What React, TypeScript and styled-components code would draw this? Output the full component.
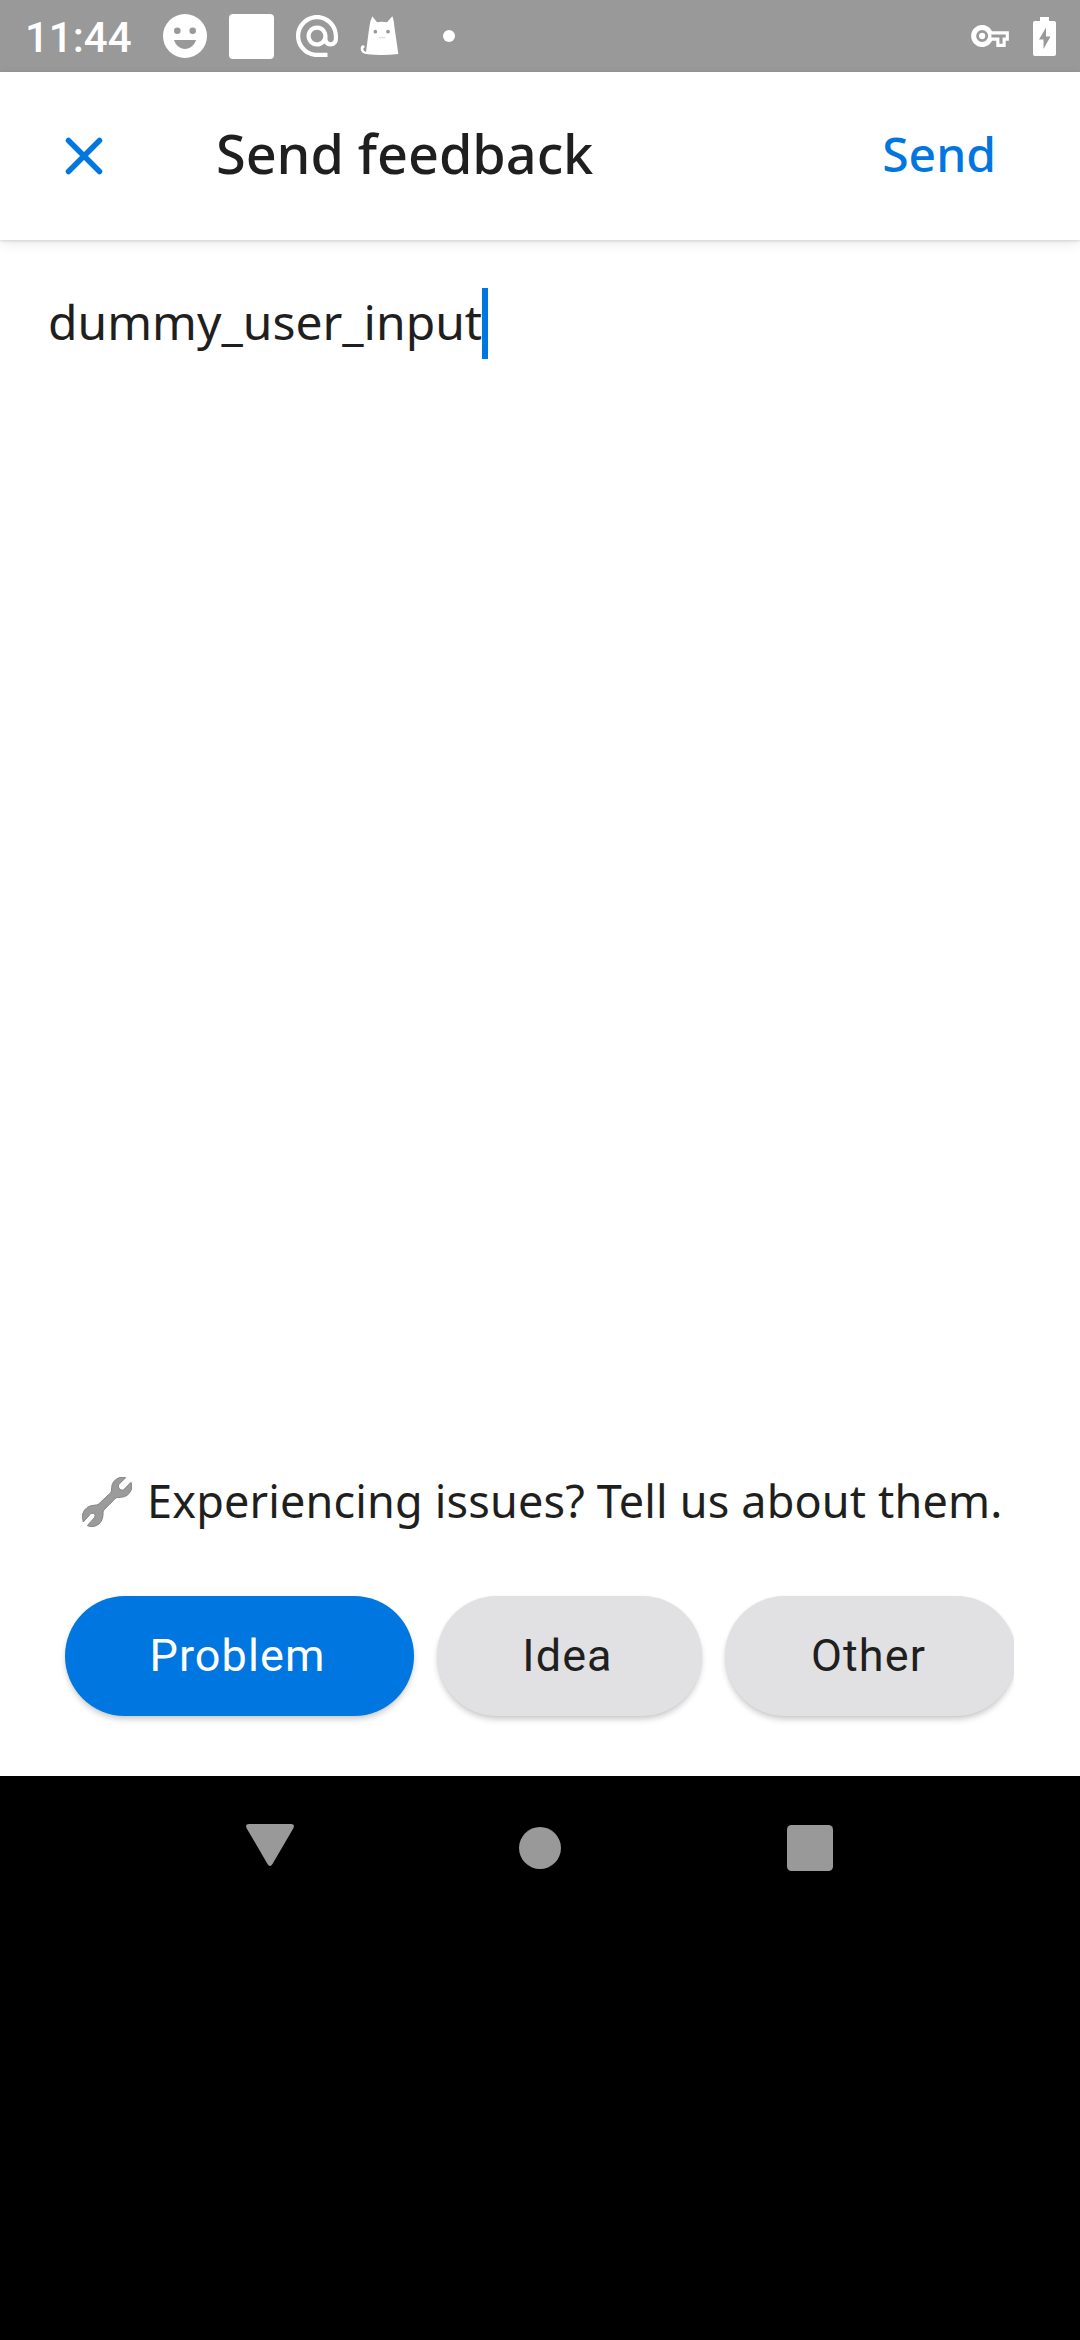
import React, { useState } from "react";
import styled, { createGlobalStyle } from "styled-components";

const GlobalStyle = createGlobalStyle`
  * { box-sizing: border-box; }
  body { margin: 0; background: #000; }
`;

const BLUE = "#0076e0";
const INK = "#1f1f20";

const Screen = styled.div`
  display: flex;
  flex-direction: column;
  width: 1080px;
  height: 2340px;
  background: #000;
  color: ${INK};
  font-family: "Noto Sans", sans-serif;
  overflow: hidden;
`;

const StatusBar = styled.header`
  display: flex;
  align-items: center;
  justify-content: space-between;
  height: 72px;
  flex: none;
  padding: 0 24px 0 25px;
  background: #999;
  color: #fff;
`;

const StatusGroup = styled.div<{ $gap: number }>`
  display: flex;
  align-items: center;
  gap: ${(p) => p.$gap}px;
`;

const Clock = styled.span`
  width: 116px;
  padding-top: 3px;
  font: 500 42px/48px Roboto, sans-serif;
  white-space: nowrap;
`;

const Glyph = styled.svg`
  display: block;
  flex: none;
`;

const Blank = styled.span`
  width: 45px;
  height: 45px;
  border-radius: 4px;
  background: #fff;
`;

const MoreDot = styled.span`
  width: 12px;
  height: 12px;
  margin-left: 22px;
  border-radius: 50%;
  background: #fff;
`;

const AppWindow = styled.main`
  display: flex;
  flex-direction: column;
  height: 1704px;
  flex: none;
  background: #fff;
`;

const Toolbar = styled.div`
  display: flex;
  align-items: center;
  height: 168px;
  flex: none;
  padding: 0 84px 0 65px;
  background: #fff;
  box-shadow: 0 1px 3px rgba(0, 0, 0, 0.14), 0 4px 12px rgba(0, 0, 0, 0.08);
`;

const PlainButton = styled.button`
  display: flex;
  border: 0;
  padding: 0;
  background: none;
  color: ${BLUE};
`;

const Title = styled.h1`
  flex: 1;
  margin: 0 0 0 113px;
  padding-bottom: 6px;
  font-size: 54px;
  font-weight: 500;
  line-height: 74px;
  letter-spacing: -0.05px;
  white-space: nowrap;
`;

const SendButton = styled(PlainButton)`
  padding-bottom: 5px;
  font: 500 48px/66px "Noto Sans", sans-serif;
`;

const Editor = styled.section`
  display: flex;
  align-items: flex-start;
  flex: 1;
  padding: 48px;
`;

const EditorText = styled.span`
  margin-top: -2px;
  font-size: 48px;
  line-height: 71px;
  white-space: nowrap;
`;

const Caret = styled.span`
  width: 6px;
  height: 71px;
  background: ${BLUE};
`;

const Footer = styled.footer`
  display: flex;
  flex-direction: column;
  gap: 61px;
  padding: 0 66px 60px 65px;
`;

const Hint = styled.p`
  display: flex;
  align-items: center;
  gap: 15px;
  height: 66px;
  margin: 0;
  padding-left: 17px;
  font-size: 45px;
  line-height: 62px;
  letter-spacing: 0.16px;
  white-space: nowrap;
`;

const HintText = styled.span`
  padding-bottom: 2px;
`;

const Chips = styled.div`
  display: flex;
  gap: 23px;
  margin: -8px 0 -24px -24px;
  padding: 8px 0 24px 24px;
  overflow: hidden;
`;

const Chip = styled.button<{ $active: boolean; $width: number }>`
  flex: none;
  width: ${(p) => p.$width}px;
  height: 120px;
  border: 0;
  border-radius: 60px;
  padding: 0 4px 2px 0;
  background: ${(p) => (p.$active ? BLUE : "#e1e1e3")};
  color: ${(p) => (p.$active ? "#fff" : INK)};
  box-shadow: 0 4px 6px -1px rgba(0, 0, 0, 0.22), 0 0 2px rgba(0, 0, 0, 0.06);
  font: 400 45px/53px Roboto, sans-serif;
  letter-spacing: 1.1px;
`;

const NavBar = styled.nav`
  display: grid;
  grid-template-columns: repeat(3, 270px);
  justify-content: center;
  justify-items: center;
  align-items: center;
  height: 144px;
  flex: none;
  color: #999;
`;

const Smile = () => (
  <Glyph width="44" height="44" viewBox="0 0 44 44">
    <circle cx="22" cy="22" r="22" fill="#fff" />
    <circle cx="14.3" cy="16.7" r="3.3" fill="#999" />
    <circle cx="29.7" cy="16.7" r="3.3" fill="#999" />
    <path d="M11 26h22c-1.800 5.400-6 9-11 9s-9.200-3.600-11-9z" fill="#999" />
  </Glyph>
);

const AtSign = () => (
  <Glyph width="42" height="42" viewBox="2 1.950 20 20" fill="#fff">
    <path d="M12 1.950c-5.520 0-10 4.480-10 10s4.480 10 10 10h5v-2h-5c-4.340 0-8-3.660-8-8s3.660-8 8-8 8 3.660 8 8v1.430c0 .79-.71 1.570-1.500 1.570s-1.500-.78-1.500-1.570v-1.430c0-2.760-2.240-5-5-5s-5 2.240-5 5 2.240 5 5 5c1.380 0 2.640-.56 3.540-1.470.65.89 1.770 1.470 2.960 1.470 1.970 0 3.500-1.600 3.500-3.570v-1.430c0-5.520-4.480-10-10-10zm0 13c-1.660 0-3-1.340-3-3s1.340-3 3-3 3 1.340 3 3-1.340 3-3 3z" />
  </Glyph>
);

const Cat = () => (
  <Glyph width="39" height="40" viewBox="425 46 117 120">
    <path
      d="M462 47l14 18q14-4 30 0l16-18q4 8 6 30l12 83q-48 6-92 1-20-1-21-16 0-11 7-11 7 1 4 7-4 1-3 5 1 6 8 8l10-75q2-18 9-32z"
      fill="#fff"
    />
    <circle cx="471" cy="93" r="5.500" fill="#999" />
    <circle cx="509" cy="93" r="5.500" fill="#999" />
    <path d="M481 111q5 2 10-1 5 3 10 1" fill="none" stroke="#ccc" strokeWidth="2.500" />
  </Glyph>
);

const Key = () => (
  <Glyph width="38" height="22" viewBox="0 5 24 14" fill="#fff">
    <path d="M22 19h-6v-4h-2.680c-1.140 2.420-3.600 4-6.320 4-3.860 0-7-3.140-7-7s3.140-7 7-7c2.720 0 5.170 1.580 6.320 4H24v6h-2v4zm-4-2h2v-4h2v-2H11.940l-.23-.67C11.010 8.340 9.110 7 7 7c-2.760 0-5 2.240-5 5s2.240 5 5 5c2.110 0 4.010-1.340 4.710-3.330l.23-.67H18v4z" />
    <path d="M7 6a6 6 0 1 0 0 12 6 6 0 1 0 0-12zm0 2.200a3.800 3.800 0 1 1 0 7.600 3.800 3.800 0 1 1 0-7.600z" />
    <circle cx="7" cy="12" r="2" />
  </Glyph>
);

const Battery = () => (
  <Glyph width="23" height="39" viewBox="0 0 23 39">
    <path d="M7 0h9v4h5q2 0 2 2v31q0 2-2 2H2q-2 0-2-2V6q0-2 2-2h5z" fill="#fff" />
    <path d="M13 10.500v9h4.500L10.500 32v-9.500H6z" fill="#999" />
  </Glyph>
);

const Cross = () => (
  <Glyph width="38" height="38" viewBox="0 0 38 38" fill="none" stroke="currentColor" strokeWidth="5.500" strokeLinecap="round">
    <path d="M3.500 3.500l31 31M34.500 3.500l-31 31" />
  </Glyph>
);

const Wrench = () => (
  <Glyph width="50" height="50" viewBox="0 0 150 150">
    <path
      d="M131 2L110 23q-4 14 13 17L147 16q4 12 1 22-9 22-32 23-10 0-15 2L64 101q-1 4-1 14-2 22-20 31-14 6-27 0l21-24q8-16-10-13L4 135q-5-14-1-27 9-21 31-23 11 0 16-4L86 47q3-4 3-15Q90 12 109 3q11-4 22-1z"
      fill="#9b9b9b"
      stroke="#858585"
      strokeWidth="3"
      strokeLinejoin="round"
    />
  </Glyph>
);

const BackIcon = () => (
  <Glyph width="48" height="48" viewBox="0 0 48 48" fill="currentColor">
    <path d="M3 0h42q4 0 2.500 4L26.500 40q-2.500 4-5 0L.5 4Q-1 0 3 0z" />
  </Glyph>
);

const HomeIcon = () => (
  <Glyph width="42" height="42" viewBox="0 0 42 42" fill="currentColor">
    <circle cx="21" cy="21" r="21" />
  </Glyph>
);

const RecentIcon = () => (
  <Glyph width="46" height="46" viewBox="0 0 46 46" fill="currentColor">
    <rect width="46" height="46" rx="4.500" />
  </Glyph>
);

const TOPICS = [
  { label: "Problem", width: 349 },
  { label: "Idea", width: 265 },
  { label: "Other", width: 291 },
];

export default function App() {
  const [topic, setTopic] = useState("Problem");
  return (
    <Screen>
      <GlobalStyle />
      <StatusBar>
        <StatusGroup $gap={22}>
          <Clock>11:44</Clock>
          <Smile />
          <Blank />
          <AtSign />
          <Cat />
          <MoreDot />
        </StatusGroup>
        <StatusGroup $gap={24}>
          <Key />
          <Battery />
        </StatusGroup>
      </StatusBar>
      <AppWindow>
        <Toolbar>
          <PlainButton aria-label="Close">
            <Cross />
          </PlainButton>
          <Title>Send feedback</Title>
          <SendButton>Send</SendButton>
        </Toolbar>
        <Editor>
          <EditorText>dummy_user_input</EditorText>
          <Caret />
        </Editor>
        <Footer>
          <Hint>
            <Wrench />
            <HintText>Experiencing issues? Tell us about them.</HintText>
          </Hint>
          <Chips>
            {TOPICS.map((t) => (
              <Chip key={t.label} $active={t.label === topic} $width={t.width} onClick={() => setTopic(t.label)}>
                {t.label}
              </Chip>
            ))}
          </Chips>
        </Footer>
      </AppWindow>
      <NavBar>
        <BackIcon />
        <HomeIcon />
        <RecentIcon />
      </NavBar>
    </Screen>
  );
}
